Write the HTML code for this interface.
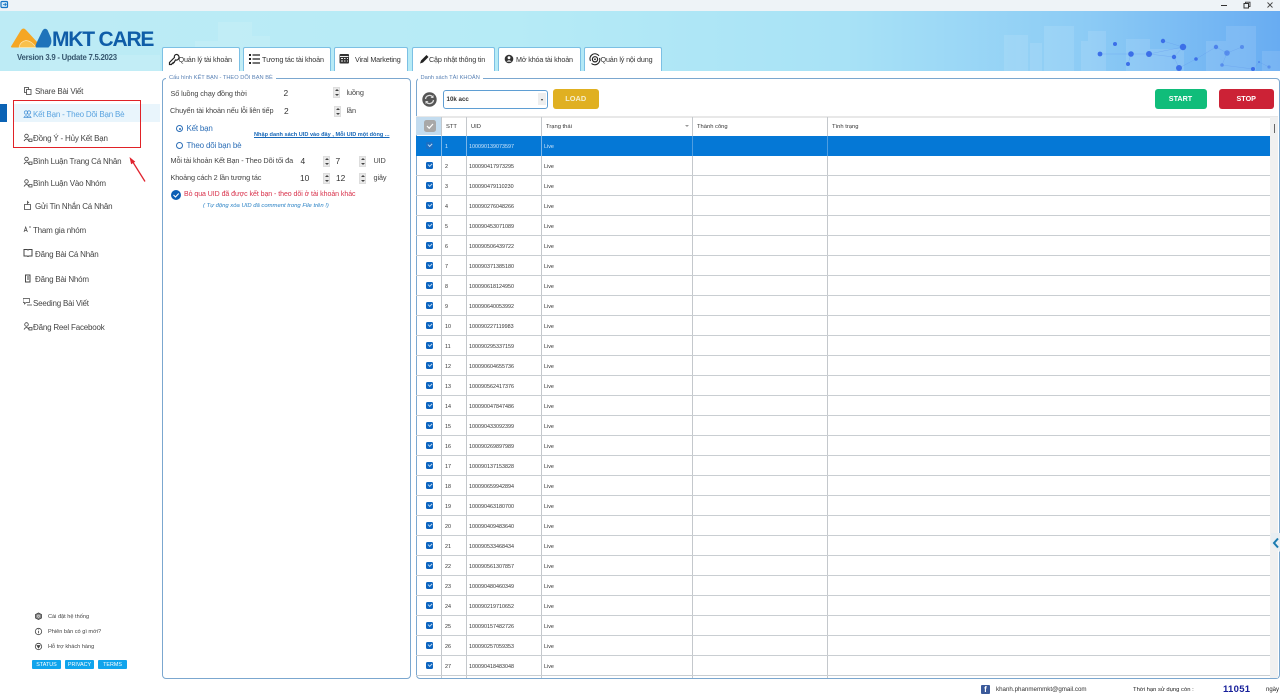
<!DOCTYPE html>
<html lang="vi"><head><meta charset="utf-8"><title>MKT Care</title>
<style>
*{box-sizing:border-box}
html,body{margin:0;padding:0;width:1280px;height:696px;overflow:hidden;background:#fff;font-family:"Liberation Sans","DejaVu Sans",sans-serif;color:#333}
body{filter:blur(.3px)}
.a{position:absolute;white-space:nowrap}
#ban{left:0;top:11px;width:1280px;height:60px;background:linear-gradient(90deg,#bdebf5 0,#b6ebf6 40%,#a8e2f6 66%,#8ccbf5 85%,#68acf2 100%);overflow:hidden}
.tab{position:absolute;top:47px;height:24px;background:#fff;border:1px solid #7cc0e4;border-bottom:0;border-radius:2px 2px 0 0;font-size:7.2px;letter-spacing:-.15px;line-height:24px;color:#333;white-space:nowrap}
.tab span{position:absolute;top:0}
.tab svg{position:absolute;top:5px}
.m{position:absolute;font-size:8px;letter-spacing:-.2px;color:#444;white-space:nowrap;line-height:13px}
.s{font-size:5.6px;letter-spacing:0;line-height:12px}
.pan{position:absolute;top:78px;height:601px;border:1px solid #7ba7cf;border-radius:4px;background:#fff}
.lg{position:absolute;top:73px;background:#fff;font-size:5.7px;color:#5a82b5;padding:0 3px;line-height:10px;white-space:nowrap}
.l{position:absolute;font-size:7.3px;letter-spacing:-.12px;color:#444;white-space:nowrap;line-height:10px}
.n{position:absolute;font-size:8.4px;color:#333;white-space:nowrap;line-height:10px}
.sp{position:absolute;width:7px;height:11px;background:#e9e9e9;border:1px solid #ddd}
.sp:before,.sp:after{content:"";position:absolute;left:1px;border-left:2px solid transparent;border-right:2px solid transparent}
.sp:before{top:1px;border-bottom:2px solid #444}
.sp:after{bottom:1px;border-top:2px solid #444}
#tb{position:absolute;left:416px;top:117px;width:854px;height:561px;overflow:hidden}
.r{position:absolute;left:0;width:854px;height:20px;border-bottom:1px solid #c9ced2;font-size:5.4px;color:#333;line-height:19px}
.r u{position:absolute;top:6px;left:10px;width:6.500px;height:7px;background:#0c64bf;border-radius:1.500px}
.r u:after{content:"";position:absolute;left:1.500px;top:1.200px;width:3.200px;height:2px;border-left:.8px solid #bcd8f2;border-bottom:.8px solid #bcd8f2;transform:rotate(-45deg)}
.r b{font-weight:400;position:absolute;top:2px;white-space:nowrap}
.r b:nth-of-type(1){left:29px}
.r b:nth-of-type(2){left:53px}
.r b:nth-of-type(3){left:128px}
.v{position:absolute;top:0;width:1px;height:561px;background:#c4c8cc}
.h{position:absolute;top:1px;font-size:5.800px;line-height:18px;white-space:nowrap}
.btn{position:absolute;border-radius:3px;color:#fff;text-align:center;font-weight:700}
.sb{position:absolute;top:660px;height:9px;background:#10a4ec;color:#fff;font-size:5.400px;line-height:10px;text-align:center;border-radius:1px}
</style></head><body>

<!-- title bar -->
<div class="a" style="left:0;top:0;width:1280px;height:11px;background:#eef3f7"></div>
<svg class="a" style="left:0;top:0" width="9" height="9" viewBox="0 0 9 9"><rect x="1" y="1.500" width="6.500" height="6" rx="1" fill="#d8ecf8" stroke="#1674c4" stroke-width="1.200"/><path d="M3 4.500h3M4.800 3.200l1.400 1.300-1.400 1.300" stroke="#1674c4" stroke-width=".8" fill="none"/></svg>
<div class="a" style="left:1221px;top:4.500px;width:6px;height:1px;background:#333"></div>
<svg class="a" style="left:1243px;top:1px" width="8" height="8" viewBox="0 0 8 8"><rect x="1" y="2.500" width="4.500" height="4.500" fill="none" stroke="#333" stroke-width="1"/><path d="M2.500 2.500V1.200h4.500v4.400H5.500" fill="none" stroke="#333" stroke-width=".9"/></svg>
<svg class="a" style="left:1266px;top:1px" width="8" height="8" viewBox="0 0 8 8"><path d="M1.500 1.500l5 5M6.500 1.500l-5 5" stroke="#444" stroke-width=".9"/></svg>

<!-- banner -->
<div id="ban" class="a">
<svg width="1280" height="60" style="position:absolute;left:0;top:0">
<g fill="#fff" opacity=".1">
<rect x="218" y="11" width="34" height="49"/><rect x="195" y="30" width="24" height="30"/><rect x="250" y="25" width="20" height="35"/><rect x="40" y="44" width="120" height="16"/>
<rect x="1004" y="24" width="24" height="36"/><rect x="1030" y="32" width="12" height="28"/><rect x="1044" y="15" width="30" height="45"/><rect x="1081" y="30" width="16" height="30"/><rect x="1088" y="20" width="18" height="40"/><rect x="1126" y="28" width="24" height="32"/><rect x="1150" y="38" width="34" height="22"/><rect x="1206" y="30" width="24" height="30"/><rect x="1226" y="15" width="30" height="45"/><rect x="1262" y="40" width="18" height="20"/>
</g>
<g stroke="#5f93ec" stroke-width=".4" opacity=".6" fill="none"><path d="M1100 43L1131 43 1149 43 1183 36 1174 46 1179 57 1196 48 1216 36 1227 42 1242 36M1149 43L1174 46M1128 53L1131 43M1163 30L1183 36M1227 42L1222 54 1253 58 1259 51 1269 56"/></g>
<g fill="#3c6fe8">
<circle cx="1100" cy="43" r="2.400"/><circle cx="1115" cy="33" r="2"/><circle cx="1131" cy="43" r="2.800"/><circle cx="1149" cy="43" r="3"/><circle cx="1128" cy="53" r="2"/><circle cx="1163" cy="30" r="2.200"/><circle cx="1183" cy="36" r="3.200"/><circle cx="1174" cy="46" r="2.200"/><circle cx="1196" cy="48" r="1.800"/><circle cx="1179" cy="57" r="3"/><circle cx="1216" cy="36" r="2.200" opacity=".75"/><circle cx="1227" cy="42" r="2.800" opacity=".6"/><circle cx="1242" cy="36" r="2" opacity=".6"/><circle cx="1222" cy="54" r="1.800" opacity=".6"/><circle cx="1253" cy="58" r="2"/><circle cx="1259" cy="51" r="1" opacity=".6"/><circle cx="1269" cy="56" r="1.600" opacity=".5"/>
</g>
</svg>
</div>
<!-- logo -->
<svg class="a" style="left:0;top:0" width="60" height="60" viewBox="0 0 60 60">
<path d="M11 46.500L21 30Q23.500 27 26 30L38 43L36 47.500H13Q10.500 47.500 11 46.500Z" fill="#f5a623"/>
<path d="M19 47.500Q20 41.500 26 40.500Q32 41 36 47.500Z" fill="#f9c04c" stroke="#fde6b0" stroke-width=".7"/>
<path d="M36.500 47.500Q34.500 47.500 36.500 43L42 31.500Q44.500 27 47.500 30L51 38Q52.500 44 48.500 47.500Z" fill="#1f73ba"/>
</svg>
<div class="a" style="left:52px;top:27.500px;font-size:21px;font-weight:700;letter-spacing:-1.200px;color:#0f5da8;line-height:24px">MKT CARE</div>
<div class="a" style="left:17px;top:51.500px;font-size:7.800px;letter-spacing:-.25px;font-weight:700;color:#35576f;line-height:12px">Version 3.9 - Update 7.5.2023</div>

<!-- tabs -->
<div class="tab" style="left:161.500px;width:78px"><svg style="left:5px" width="12" height="13" viewBox="0 0 12 13"><path d="M9 1.500a2.300 2.300 0 0 0-2.600 3L1.500 9.500v2h2l.6-1h1v-1h1l1.300-2.500A2.400 2.400 0 1 0 9 1.500z" fill="none" stroke="#222" stroke-width="1.200"/></svg><span style="left:16px">Quản lý tài khoản</span></div>
<div class="tab" style="left:243px;width:88px"><svg style="left:5px" width="11" height="12" viewBox="0 0 11 12"><path d="M0 1h2v2H0zM0 5h2v2H0zM0 9h2v2H0z" fill="#222"/><path d="M3.500 2H11M3.500 6H11M3.500 10H11" stroke="#222" stroke-width="1.300"/></svg><span style="left:18px">Tương tác tài khoản</span></div>
<div class="tab" style="left:334px;width:74px"><svg style="left:4px" width="11" height="12" viewBox="0 0 11 12"><rect x=".5" y="1" width="9.500" height="9.500" rx="1" fill="#333"/><path d="M1 3.500h8.500M2 5.500h2M5 5.500h1.500M8 5.500h1M2 8h2M5 8h1.500M8 8h1" stroke="#eee" stroke-width=".9"/></svg><span style="left:20px">Viral Marketing</span></div>
<div class="tab" style="left:411.500px;width:83px"><svg style="left:6px" width="11" height="12" viewBox="0 0 11 12"><path d="M1 10.500l1-3 5.500-5.500 2 2L4 9.500z" fill="#222"/></svg><span style="left:16.500px">Cập nhật thông tin</span></div>
<div class="tab" style="left:498px;width:82.500px"><svg style="left:5px" width="10" height="12" viewBox="0 0 10 12"><circle cx="5" cy="6" r="4.300" fill="#333"/><circle cx="5" cy="4.700" r="1.400" fill="#fff"/><path d="M2.500 8.600q2.500-2.600 5 0" fill="#fff"/></svg><span style="left:17px">Mở khóa tài khoản</span></div>
<div class="tab" style="left:583.500px;width:78px"><svg style="left:4px" width="12" height="13" viewBox="0 0 12 13"><path d="M1.500 8A5 5 0 0 1 10 2.800M10.500 5A5 5 0 0 1 2.500 10.500" fill="none" stroke="#222" stroke-width="1.100"/><circle cx="6" cy="6.300" r="2.600" fill="none" stroke="#222" stroke-width="1.200"/><circle cx="6" cy="6.300" r=".9" fill="#222"/></svg><span style="left:16px">Quản lý nội dung</span></div>

<!-- sidebar -->
<div class="a" style="left:0;top:104px;width:7px;height:18px;background:#0b63b5"></div>
<div class="a" style="left:13px;top:104px;width:147px;height:18px;background:#e9f5fc"></div>
<div class="m" style="left:35px;top:85px">Share Bài Viết</div>
<div class="m" style="left:33px;top:108px;color:#5ba4e0">Kết Bạn - Theo Dõi Bạn Bè</div>
<div class="m" style="left:33px;top:132px">Đồng Ý - Hủy Kết Bạn</div>
<div class="m" style="left:33px;top:155px">Bình Luận Trang Cá Nhân</div>
<div class="m" style="left:33px;top:177px">Bình Luận Vào Nhóm</div>
<div class="m" style="left:35px;top:200px">Gửi Tin Nhắn Cá Nhân</div>
<div class="m" style="left:33px;top:223.500px">Tham gia nhóm</div>
<div class="m" style="left:35px;top:247.500px">Đăng Bài Cá Nhân</div>
<div class="m" style="left:35px;top:273px">Đăng Bài Nhóm</div>
<div class="m" style="left:33px;top:296.500px">Seeding Bài Viết</div>
<div class="m" style="left:33px;top:320.500px">Đăng Reel Facebook</div>
<svg class="a" style="left:23px;top:85px" width="11" height="250" viewBox="0 0 11 250" fill="none" stroke="#444" stroke-width=".8">
<g transform="translate(0,6)"><rect x="1.500" y="-3.500" width="4" height="5"/><rect x="3.500" y="-1.500" width="4.500" height="5" fill="#fff"/></g>
<g transform="translate(0,29)" stroke="#4f97d8"><circle cx="3" cy="-1.500" r="1.700"/><circle cx="6" cy="-1.500" r="1.700"/><path d="M1 3.500q2-3.500 4 0zM4 3.500q2-3.500 4 0z"/></g>
<g transform="translate(0,52.500)"><circle cx="3.500" cy="-1.500" r="1.800"/><path d="M1 3.500q2.500-4 5 0M6 1.500h3v2.500H6z"/></g>
<g transform="translate(0,75.500)"><circle cx="3.500" cy="-1.500" r="1.800"/><path d="M1 3.500q2.500-4 5 0M6 1.500h3v2.500H6z"/></g>
<g transform="translate(0,98)"><circle cx="3.500" cy="-1.500" r="1.800"/><path d="M1 3.500q2.500-4 5 0M6 1.500h3v2.500H6z"/></g>
<g transform="translate(0,120.500)"><path d="M1.500 -1h6v5h-6zM4.500 -1v-3l1.500 1.500"/></g>
<g transform="translate(0,144)" stroke-width=".7"><path d="M1 3l1.700-5 1.700 5M1.600 1.500h2.200M6 -2h2"/></g>
<g transform="translate(0,168)" stroke-width="1"><path d="M1 -3.500h3q1 0 1 1 0-1 1-1h3v6.500H6q-1 0-1 1 0-1-1-1H1z"/></g>
<g transform="translate(0,193.500)" stroke-width="1"><path d="M2.500 -3.500h4.500v7H2.500zM4 -1.500h2M4 .5h2"/></g>
<g transform="translate(0,217)" stroke-width=".7"><path d="M0 -3.500h6.500v4H3l-1.500 1.500V.5H0zM4 3h5"/></g>
<g transform="translate(0,241)"><circle cx="3.500" cy="-1.500" r="1.800"/><path d="M1 3.500q2.500-4 5 0M6 1.500h3v2.500H6z"/></g>
</svg>

<!-- red annotation -->
<div class="a" style="left:12.500px;top:99.500px;width:128px;height:48px;border:1.500px solid #e02227"></div>
<svg class="a" style="left:125px;top:150px" width="25" height="36" viewBox="0 0 25 36"><path d="M20 31.500L7.500 11.500" stroke="#e0232e" stroke-width="1.300"/><path d="M4.500 7L6.100 14.300 10.300 11.700z" fill="#e0232e"/></svg>

<!-- bottom left -->
<div class="m s" style="left:48px;top:611px">Cài đặt hệ thống</div>
<div class="m s" style="left:48px;top:626px">Phiên bản có gì mới?</div>
<div class="m s" style="left:48px;top:641px">Hỗ trợ khách hàng</div>
<svg class="a" style="left:34px;top:612px" width="9" height="42" viewBox="0 0 9 42" fill="none" stroke="#444" stroke-width=".8"><path d="M4.500 1l3 1.500V6l-3 1.500L1.500 6V2.500z" fill="#888"/><circle cx="4.500" cy="4.200" r="1.100" stroke="#fff" stroke-width=".5"/><circle cx="4.500" cy="19.500" r="3.200"/><path d="M4.500 18.700v2.500M4.500 17.500v.5"/><circle cx="4.500" cy="34.500" r="3.200"/><path d="M3 33.500h3l-1.500 2.500z" fill="#444"/></svg>
<div class="sb" style="left:32px;width:29px">STATUS</div>
<div class="sb" style="left:65px;width:29px">PRIVACY</div>
<div class="sb" style="left:98px;width:29px">TERMS</div>

<!-- left panel -->
<div class="pan" style="left:162px;width:248.500px"></div>
<div class="lg" style="left:166px">Cấu hình KẾT BẠN - THEO DÕI BẠN BÈ</div>
<div class="l" style="left:170.500px;top:89px">Số luồng chạy đồng thời</div>
<div class="n" style="left:283.500px;top:87.500px">2</div>
<div class="sp" style="left:333px;top:87px"></div>
<div class="l" style="left:346.500px;top:88px">luồng</div>
<div class="l" style="left:170px;top:106px">Chuyển tài khoản nếu lỗi liên tiếp</div>
<div class="n" style="left:284px;top:106px">2</div>
<div class="sp" style="left:333.500px;top:106px"></div>
<div class="l" style="left:346.500px;top:106px">lần</div>
<div class="a" style="left:176px;top:125px;width:7px;height:7px;border:1px solid #2d6fb7;border-radius:50%"></div>
<div class="a" style="left:178.500px;top:127.500px;width:2px;height:2px;background:#2d6fb7;border-radius:50%"></div>
<div class="a" style="left:186.500px;top:123px;font-size:8px;letter-spacing:-.2px;color:#2d6fb7;line-height:12px">Kết bạn</div>
<div class="a" style="left:176px;top:141.500px;width:7px;height:7px;border:1px solid #2d6fb7;border-radius:50%"></div>
<div class="a" style="left:186.500px;top:139.500px;font-size:8px;letter-spacing:-.2px;color:#2d6fb7;line-height:12px">Theo dõi bạn bè</div>
<div class="a" style="left:254px;top:131px;font-size:5.600px;font-weight:700;color:#1667b8;line-height:9px;text-decoration:underline">Nhập danh sách UID vào đây , Mỗi UID một dòng ...</div>
<div class="l" style="left:170.500px;top:156px">Mỗi tài khoản Kết Bạn - Theo Dõi tối đa</div>
<div class="n" style="left:300.500px;top:156px">4</div>
<div class="sp" style="left:323px;top:156px"></div>
<div class="n" style="left:335.500px;top:156px">7</div>
<div class="sp" style="left:359px;top:156px"></div>
<div class="l" style="left:373.500px;top:156px">UID</div>
<div class="l" style="left:170.500px;top:173px">Khoảng cách 2 lần tương tác</div>
<div class="n" style="left:300px;top:172.500px">10</div>
<div class="sp" style="left:323px;top:172.500px"></div>
<div class="n" style="left:336px;top:172.500px">12</div>
<div class="sp" style="left:359px;top:172.500px"></div>
<div class="l" style="left:373.500px;top:173px">giây</div>
<svg class="a" style="left:171px;top:190px" width="10" height="10" viewBox="0 0 10 10"><circle cx="5" cy="5" r="5" fill="#0c5fb5"/><path d="M2.500 5l2 2 3.200-3.500" stroke="#fff" stroke-width="1.100" fill="none"/></svg>
<div class="a" style="left:184px;top:190px;font-size:7px;letter-spacing:-.05px;color:#d8304a;line-height:10px">Bỏ qua UID đã được kết bạn - theo dõi ở tài khoản khác</div>
<div class="a" style="left:203px;top:200.500px;font-size:5.900px;font-style:italic;color:#2a82c5;line-height:10px">( Tự động xóa UID đã comment trong File trên !)</div>

<!-- right panel -->
<div class="pan" style="left:415.500px;width:864px"></div>
<div class="lg" style="left:417.500px">Danh sách TÀI KHOẢN</div>
<svg class="a" style="left:422px;top:92px" width="15" height="15" viewBox="0 0 15 15"><circle cx="7.500" cy="7.500" r="7.200" fill="#555"/><path d="M3.500 7a4 4 0 0 1 7-2.200M11.500 8a4 4 0 0 1-7 2.200" fill="none" stroke="#ddd" stroke-width="1.300"/><path d="M11.500 3v3h-3zM3.500 12V9h3z" fill="#ddd"/></svg>
<div class="a" style="left:443px;top:90px;width:105px;height:19px;border:1px solid #5f9ed3;border-radius:3px;background:#fff;font-size:6.200px;font-weight:700;line-height:17px;padding-left:2.500px;color:#333">10k acc</div>
<div class="a" style="left:538px;top:93px;width:8px;height:12px;background:#eee"></div>
<div class="a" style="left:540.500px;top:98.500px;border-left:1.500px solid transparent;border-right:1.500px solid transparent;border-top:2px solid #333"></div>
<div class="btn" style="left:552.500px;top:89px;width:46.500px;height:20px;background:#e0b021;color:#f5eecb;line-height:20px;font-size:7.400px">LOAD</div>
<div class="btn" style="left:1154.500px;top:89px;width:52px;height:20px;background:#10bd7a;line-height:20px;font-size:7.200px">START</div>
<div class="btn" style="left:1218.500px;top:89px;width:55.500px;height:20px;background:#cc2236;line-height:20px;font-size:7.200px">STOP</div>

<div class="a" style="left:416px;top:115.500px;width:862px;height:2px;background:#e8e8e8"></div>
<div id="tb">
<div class="a" style="left:0;top:0;width:25px;height:18px;background:#c3dcef"></div>
<div class="a" style="left:8px;top:3px;width:12px;height:12px;background:#a8a8a8;border-radius:2.500px"></div>
<svg class="a" style="left:8px;top:3px" width="12" height="12" viewBox="0 0 12 12"><path d="M3 6l2.200 2.200L9 4" stroke="#fff" stroke-width="1.200" fill="none"/></svg>
<div class="h" style="left:30px">STT</div>
<div class="h" style="left:55px">UID</div>
<div class="h" style="left:130px">Trạng thái</div>
<div class="a" style="left:269px;top:8px;border-left:2px solid transparent;border-right:2px solid transparent;border-top:2px solid #999"></div>
<div class="h" style="left:281px">Thành công</div>
<div class="h" style="left:416px">Tình trạng</div>

<div class="v" style="left:25px"></div><div class="v" style="left:50px"></div><div class="v" style="left:125px"></div><div class="v" style="left:276px"></div><div class="v" style="left:411px"></div>
<div class="a" style="left:0;top:18.500px;width:854px;height:20px;background:#0578d6"></div>
<div class="a" style="left:25px;top:18.500px;width:1px;height:20px;background:#7ab5e8"></div><div class="a" style="left:50px;top:18.500px;width:1px;height:20px;background:#7ab5e8"></div><div class="a" style="left:125px;top:18.500px;width:1px;height:20px;background:#7ab5e8"></div><div class="a" style="left:276px;top:18.500px;width:1px;height:20px;background:#4f9de0"></div><div class="a" style="left:411px;top:18.500px;width:1px;height:20px;background:#4f9de0"></div>

<div class="r" style="top:18.500px;color:#cfe6fa;border-bottom:0"><u style="background:#1a6fc4"></u><b>1</b><b>100090139073597</b><b>Live</b></div>
<div class="r" style="top:38.500px"><u></u><b>2</b><b>100090417973295</b><b>Live</b></div>
<div class="r" style="top:58.500px"><u></u><b>3</b><b>100090479110230</b><b>Live</b></div>
<div class="r" style="top:78.500px"><u></u><b>4</b><b>100090276048266</b><b>Live</b></div>
<div class="r" style="top:98.500px"><u></u><b>5</b><b>100090453071089</b><b>Live</b></div>
<div class="r" style="top:118.500px"><u></u><b>6</b><b>100090506439722</b><b>Live</b></div>
<div class="r" style="top:138.500px"><u></u><b>7</b><b>100090371385180</b><b>Live</b></div>
<div class="r" style="top:158.500px"><u></u><b>8</b><b>100090618124950</b><b>Live</b></div>
<div class="r" style="top:178.500px"><u></u><b>9</b><b>100090640053992</b><b>Live</b></div>
<div class="r" style="top:198.500px"><u></u><b>10</b><b>100090227119983</b><b>Live</b></div>
<div class="r" style="top:218.500px"><u></u><b>11</b><b>100090295337159</b><b>Live</b></div>
<div class="r" style="top:238.500px"><u></u><b>12</b><b>100090604655736</b><b>Live</b></div>
<div class="r" style="top:258.500px"><u></u><b>13</b><b>100090562417376</b><b>Live</b></div>
<div class="r" style="top:278.500px"><u></u><b>14</b><b>100090047847486</b><b>Live</b></div>
<div class="r" style="top:298.500px"><u></u><b>15</b><b>100090433092399</b><b>Live</b></div>
<div class="r" style="top:318.500px"><u></u><b>16</b><b>100090269897989</b><b>Live</b></div>
<div class="r" style="top:338.500px"><u></u><b>17</b><b>100090137153828</b><b>Live</b></div>
<div class="r" style="top:358.500px"><u></u><b>18</b><b>100090659942894</b><b>Live</b></div>
<div class="r" style="top:378.500px"><u></u><b>19</b><b>100090463180700</b><b>Live</b></div>
<div class="r" style="top:398.500px"><u></u><b>20</b><b>100090409483640</b><b>Live</b></div>
<div class="r" style="top:418.500px"><u></u><b>21</b><b>100090533468434</b><b>Live</b></div>
<div class="r" style="top:438.500px"><u></u><b>22</b><b>100090561307857</b><b>Live</b></div>
<div class="r" style="top:458.500px"><u></u><b>23</b><b>100090480460349</b><b>Live</b></div>
<div class="r" style="top:478.500px"><u></u><b>24</b><b>100090219710652</b><b>Live</b></div>
<div class="r" style="top:498.500px"><u></u><b>25</b><b>100090157482726</b><b>Live</b></div>
<div class="r" style="top:518.500px"><u></u><b>26</b><b>100090257059353</b><b>Live</b></div>
<div class="r" style="top:538.500px"><u></u><b>27</b><b>100090418483048</b><b>Live</b></div>
</div>
<!-- scrollbar -->
<div class="a" style="left:1270px;top:117px;width:8px;height:561px;background:#f0f0f0"></div>
<div class="a" style="left:1273.500px;top:124px;width:1px;height:9px;background:#666"></div>
<div class="a" style="left:1271px;top:533px;width:9px;height:19px;background:#e8eef2;clip-path:polygon(0 0,100% 0,100% 100%,0 60%)"></div>
<svg class="a" style="left:1272px;top:537px" width="8" height="12" viewBox="0 0 8 12"><path d="M6 1.500L2 6l4 4.500" stroke="#1b7bb0" stroke-width="2" fill="none"/></svg>

<!-- footer -->
<div class="a" style="left:981px;top:685px;width:9px;height:9px;background:#3b5a9a;border-radius:1px;color:#fff;font-size:8px;font-weight:700;line-height:10px;text-align:center">f</div>
<div class="a" style="left:996px;top:684.500px;font-size:6.200px;color:#333;line-height:10px">khanh.phanmemmkt@gmail.com</div>
<div class="a" style="left:1133px;top:685px;font-size:5.850px;color:#222;line-height:10px">Thời hạn sử dụng còn :</div>
<div class="a" style="left:1223px;top:683.500px;font-size:9.500px;font-weight:700;color:#17209a;letter-spacing:.3px;line-height:12px">11051</div>
<div class="a" style="left:1266px;top:685px;font-size:6px;color:#222;line-height:10px">ngày</div>
</body></html>
